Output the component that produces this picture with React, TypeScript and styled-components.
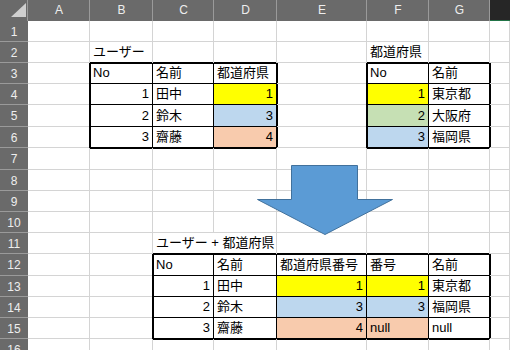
import { createGlobalStyle, styled } from "styled-components";

const GlobalStyle = createGlobalStyle`
  html, body {
    margin: 0;
    padding: 0;
    background: #fff;
    overflow: hidden;
  }
  body {
    font-family: "Liberation Sans", "Noto Sans CJK JP", sans-serif;
  }
`;

const COLS = ["A", "B", "C", "D", "E", "F", "G", "H"];
const COL_WIDTHS = [62, 63, 61, 63, 90, 62, 61];
const ROW_HEIGHTS = [21, 21, 21, 21, 22, 21, 22, 21, 21, 21, 21, 22, 21, 21, 21, 21];

const YELLOW = "#ffff00";
const BLUE = "#bdd7ee";
const GREEN = "#c6e0b4";
const PEACH = "#f8cbad";
const GRID = "#d4d4d4";

type CellData = { v: string; bg?: string; span?: number };

const data: Record<string, CellData> = {
  B2: { v: "ユーザー" },
  B3: { v: "No" },
  C3: { v: "名前" },
  D3: { v: "都道府県" },
  B4: { v: "1" },
  C4: { v: "田中" },
  D4: { v: "1", bg: YELLOW },
  B5: { v: "2" },
  C5: { v: "鈴木" },
  D5: { v: "3", bg: BLUE },
  B6: { v: "3" },
  C6: { v: "齋藤" },
  D6: { v: "4", bg: PEACH },

  F2: { v: "都道府県" },
  F3: { v: "No" },
  G3: { v: "名前" },
  F4: { v: "1", bg: YELLOW },
  G4: { v: "東京都" },
  F5: { v: "2", bg: GREEN },
  G5: { v: "大阪府" },
  F6: { v: "3", bg: BLUE },
  G6: { v: "福岡県" },

  C11: { v: "ユーザー + 都道府県", span: 2 },
  C12: { v: "No" },
  D12: { v: "名前" },
  E12: { v: "都道府県番号" },
  F12: { v: "番号" },
  G12: { v: "名前" },
  C13: { v: "1" },
  D13: { v: "田中" },
  E13: { v: "1", bg: YELLOW },
  F13: { v: "1", bg: YELLOW },
  G13: { v: "東京都" },
  C14: { v: "2" },
  D14: { v: "鈴木" },
  E14: { v: "3", bg: BLUE },
  F14: { v: "3", bg: BLUE },
  G14: { v: "福岡県" },
  C15: { v: "3" },
  D15: { v: "齋藤" },
  E15: { v: "4", bg: PEACH },
  F15: { v: "null", bg: PEACH },
  G15: { v: "null" },
};

// bordered ranges: [c1, r1, c2, r2] with column index A=0
const TABLES: [number, number, number, number][] = [
  [1, 3, 3, 6],
  [5, 3, 6, 6],
  [2, 12, 6, 15],
];

const tableOf = (c: number, r: number) => {
  const i = TABLES.findIndex(([c1, r1, c2, r2]) => c >= c1 && c <= c2 && r >= r1 && r <= r2);
  return i < 0 ? null : i;
};

const Sheet = styled.div`
  position: relative;
  display: grid;
  grid-template-columns: 28px ${COL_WIDTHS.map((w) => `${w}px`).join(" ")} minmax(0, 1fr);
  grid-template-rows: 21px ${ROW_HEIGHTS.map((h) => `${h}px`).join(" ")};
  width: 510px;
  height: 350px;
  overflow: hidden;
  background: #fff;
`;

const Corner = styled.div`
  position: relative;
  background: #6a6a6a;
  box-shadow: inset -1px 0 0 #9a9a9a;
  &::after {
    content: "";
    position: absolute;
    left: 11px;
    top: 3px;
    width: 15px;
    height: 14px;
    background: #cfcfcf;
    clip-path: polygon(100% 0, 100% 100%, 0 100%);
  }
`;

const ColHeader = styled.div<{ $active?: boolean }>`
  display: flex;
  align-items: center;
  justify-content: center;
  padding-bottom: 1px;
  background: ${(p) => (p.$active ? "#262626" : "#6a6a6a")};
  color: #eeeeee;
  font-size: 12px;
  box-shadow: ${(p) =>
    p.$active ? "inset 0 -1px 0 #217346" : "inset -1px 0 0 #9a9a9a"};
`;

const RowHeader = styled.div`
  display: flex;
  align-items: center;
  justify-content: center;
  background: #6a6a6a;
  color: #eeeeee;
  font-size: 12px;
  box-shadow: inset 0 -1px 0 #9a9a9a;
`;

const Cell = styled.div<{
  $bg?: string;
  $right: string;
  $bottom: string;
  $edgeL: boolean;
  $edgeT: boolean;
  $num: boolean;
  $span: number;
}>`
  grid-column: span ${(p) => p.$span};
  display: flex;
  align-items: center;
  justify-content: ${(p) => (p.$num ? "flex-end" : "flex-start")};
  padding: 0 4px 1px 3px;
  background: ${(p) => p.$bg ?? "#fff"};
  color: #000;
  font-size: 13px;
  line-height: 20px;
  white-space: nowrap;
  box-shadow: ${(p) =>
    [
      `inset -1px 0 0 ${p.$right}`,
      `inset 0 -1px 0 ${p.$bottom}`,
      p.$edgeL ? "inset 1px 0 0 #000" : null,
      p.$edgeT ? "inset 0 1px 0 #000" : null,
    ]
      .filter(Boolean)
      .join(", ")};
`;

const Arrow = styled.svg`
  position: absolute;
  left: 256px;
  top: 164px;
  width: 138px;
  height: 72px;
`;

const SheetCells = () => {
  const items: JSX.Element[] = [];
  ROW_HEIGHTS.forEach((_, ri) => {
    const r = ri + 1;
    items.push(<RowHeader key={`h${r}`}>{r}</RowHeader>);
    let c = 0;
    while (c < COLS.length) {
      const key = `${COLS[c]}${r}`;
      const d = data[key];
      const span = d?.span ?? 1;
      const last = c + span - 1;
      const t = tableOf(c, r);
      items.push(
        <Cell
          key={key}
          $span={span}
          $bg={d?.bg}
          $num={!!d && /^\d+$/.test(d.v)}
          $right={tableOf(last, r) !== null || tableOf(last + 1, r) !== null ? "#000" : GRID}
          $bottom={t !== null || tableOf(c, r + 1) !== null ? "#000" : GRID}
          $edgeL={t !== tableOf(c - 1, r)}
          $edgeT={t !== tableOf(c, r - 1)}
        >
          {d?.v}
        </Cell>
      );
      c += span;
    }
  });
  return <>{items}</>;
};

const App = () => {
  return (
    <>
      <GlobalStyle />
      <Sheet>
        <Corner />
        {COLS.map((l) => (
          <ColHeader key={l} $active={l === "H"}>
            {l === "H" ? "" : l}
          </ColHeader>
        ))}
        <SheetCells />
        <Arrow viewBox="0 0 138 72">
          <polygon
            points="35.5,1.5 101.5,1.5 101.5,35.5 136.5,35.5 69,70.5 1.5,35.5 35.5,35.5"
            fill="#5b9bd5"
            stroke="#41719c"
            strokeWidth="1"
          />
        </Arrow>
      </Sheet>
    </>
  );
};

export default App;
